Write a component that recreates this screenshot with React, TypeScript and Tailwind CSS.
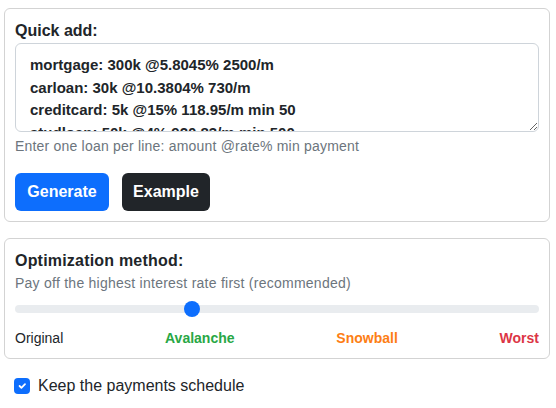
import React from "react";

const loans = `mortgage: 300k @5.8045% 2500/m
carloan: 30k @10.3804% 730/m
creditcard: 5k @15% 118.95/m min 50
studloan: 50k @4% 920.83/m min 500`;

export default function App() {
  return (
    <div className="min-h-[408px] w-[556px] bg-white pl-[4px] pr-[6px] pt-[8px] text-[#212529] [font-family:'Liberation_Sans',Arial,sans-serif]">
      <div className="rounded-[6px] border border-[#d3d3d3] px-[10px] pb-[10px] pt-[10px]">
        <div className="text-[16px] font-bold leading-[24px]">Quick add:</div>
        <textarea
          readOnly
          value={loans}
          className="block h-[89px] w-full resize-y overflow-hidden rounded-[6px] border border-[#ced4da] pl-[14px] pr-[12px] pt-[10px] text-[15px] font-bold leading-[22.5px] text-[#212529] outline-none [font-family:'Liberation_Sans',Arial,sans-serif]"
        />
        <div className="mt-[4px] text-[14px] leading-[21px] tracking-[0.2px] text-[#6c757d]">
          Enter one loan per line: amount @rate% min payment
        </div>
        <div className="mt-[16px] flex gap-[13px]">
          <button className="flex h-[38px] w-[94px] items-center justify-center rounded-[6px] bg-[#0d6efd] text-[16px] font-semibold text-white">
            Generate
          </button>
          <button className="flex h-[38px] w-[88px] items-center justify-center rounded-[6px] bg-[#212529] text-[16px] font-semibold text-white">
            Example
          </button>
        </div>
      </div>

      <div className="mt-[16px] rounded-[6px] border border-[#d3d3d3] px-[10px] pb-[10px] pt-[10px]">
        <div className="text-[16px] font-bold leading-[24px] tracking-[0.2px]">Optimization method:</div>
        <div className="text-[14px] leading-[21px] tracking-[0.25px] text-[#6c757d]">
          Pay off the highest interest rate first (recommended)
        </div>
        <div className="relative mt-[7px] flex h-[16px] items-center">
          <div className="h-[8px] w-full rounded-full bg-[#e9ecef]" />
          <div className="absolute left-[169px] top-0 h-[16px] w-[16px] rounded-full bg-[#0d6efd]" />
        </div>
        <div className="mt-[12px] flex justify-between text-[14px] leading-[19px]">
          <span>Original</span>
          <span className="font-bold text-[#28a745]">Avalanche</span>
          <span className="font-bold text-[#fd7e14]">Snowball</span>
          <span className="font-bold text-[#dc3545]">Worst</span>
        </div>
      </div>

      <label className="mt-[15px] flex items-center gap-[8px] pl-[10px]">
        <span className="flex h-[16px] w-[16px] items-center justify-center rounded-[4px] bg-[#0d6efd]">
          <svg width="12" height="12" viewBox="0 0 20 20" fill="none">
            <path d="M6 10l3 3 6-6" stroke="white" strokeWidth="3" strokeLinecap="round" strokeLinejoin="round" />
          </svg>
        </span>
        <span className="text-[16px] leading-[24px]">Keep the payments schedule</span>
      </label>
    </div>
  );
}
